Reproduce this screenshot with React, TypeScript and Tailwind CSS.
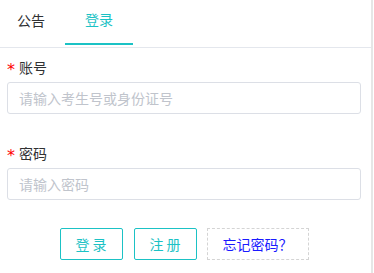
import { useState } from "react";

const font = { fontFamily: '"Noto Sans CJK SC", "Noto Sans", sans-serif' };

function Field({ label, placeholder, type }: { label: string; placeholder: string; type?: string }) {
  return (
    <div className="flex flex-col">
      <div className="flex items-center h-[20px] text-[14px] text-[#303133]">
        <span className="relative top-[3px] w-[12px] text-[16px] leading-none text-[#f00]" style={{ fontFamily: '"DejaVu Sans", sans-serif' }}>*</span>
        <span>{label}</span>
      </div>
      <input
        type={type || "text"}
        placeholder={placeholder}
        className="mt-[5px] h-[32px] w-full border border-[#dcdfe6] rounded-[3px] px-[11px] text-[14px] outline-none placeholder:text-[#c0c4cc]"
      />
    </div>
  );
}

export default function App() {
  const [tab, setTab] = useState("login");

  return (
    <div className="w-[374px] h-[273px] bg-white" style={font}>
      <div className="w-[373px] h-full border-r-2 border-[#e6e6e6]">
        <div className="flex h-[48px] border-b border-[#e4e7ed] text-[14px]">
          <button
            onClick={() => setTab("notice")}
            className={`h-[45px] pb-[4px] pl-[17px] pr-[20px] ${tab === "notice" ? "border-b-2 border-[#1bc2c5] text-[#1bc2c5]" : "text-[#303133]"}`}
          >
            公告
          </button>
          <button
            onClick={() => setTab("login")}
            className={`h-[45px] pb-[4px] px-[20px] ${tab === "login" ? "border-b-2 border-[#1bc2c5] text-[#1bc2c5]" : "text-[#303133]"}`}
          >
            登录
          </button>
        </div>

        <div className="pl-[7px] pr-[10px] pt-[9px] flex flex-col gap-[29px]">
          <Field label="账号" placeholder="请输入考生号或身份证号" />
          <Field label="密码" placeholder="请输入密码" type="password" />
        </div>

        <div className="flex justify-center gap-[10px] mt-[28px] pl-[7px] pr-[10px] text-[14px]">
          <button className="w-[63px] h-[32px] border border-[#1bc2c5] rounded-[2px] text-[#1bc2c5]">登 录</button>
          <button className="w-[63px] h-[32px] border border-[#1bc2c5] rounded-[2px] text-[#1bc2c5] ml-[1px]">注 册</button>
          <button className="w-[102px] h-[32px] border border-dashed border-[#d4d4d4] text-[#1a1aff]">忘记密码？</button>
        </div>
      </div>
    </div>
  );
}
